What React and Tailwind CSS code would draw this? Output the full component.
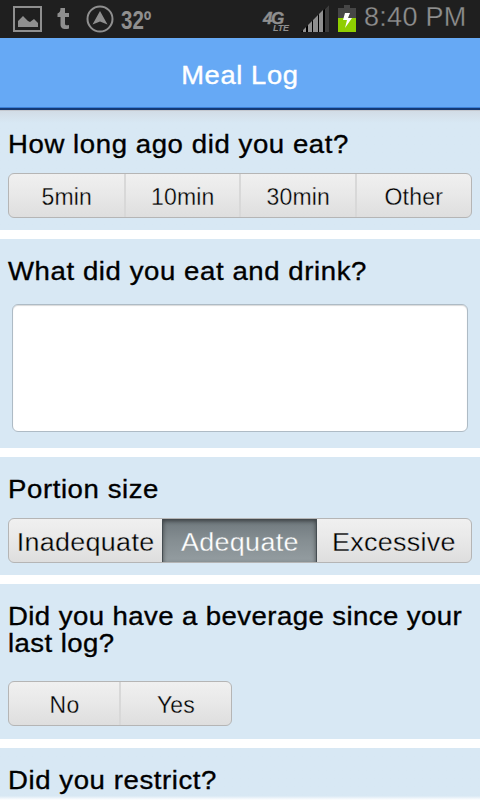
import React from 'react';
import clsx from 'clsx';

function StatusBar() {
  return (
    <div className="flex h-[38px] items-start bg-[#1f1f1f] text-[#8f8f8f]">
      <svg className="ml-[13px] mt-[6px] shrink-0" width="29" height="26" viewBox="0 0 29 26">
        <rect x="1" y="1" width="27" height="24" fill="none" stroke="#8f8f8f" strokeWidth="2" />
        <path d="M5 21v-6l5-5 5 5 2 1 4-3 4 4v4z" fill="#8f8f8f" />
      </svg>
      <svg className="ml-[15px] mt-[7px] shrink-0" width="13" height="23" viewBox="0 0 13 23">
        <path d="M3.5 1H8v5h4v4H8v6.500c0 1.900 1.500 2.100 4 1.500V21.500c-4.500 1.200-8.500.5-8.500-4V10H.5V6.500C2.700 6 3.500 4 3.500 1z" fill="#8f8f8f" />
      </svg>
      <svg className="ml-[16px] mt-[5px] shrink-0" width="28" height="28" viewBox="0 0 28 28">
        <circle cx="14" cy="14" r="12.500" fill="none" stroke="#8f8f8f" strokeWidth="2" />
        <path d="M14 6l7.500 13.500L14 16.500 6.500 19.500z" fill="#8f8f8f" />
      </svg>
      <span className="ml-[7px] mt-[8px] w-[31px] origin-left scale-x-[0.82] whitespace-nowrap font-['Liberation_Sans'] text-[25px] font-bold leading-[24px]">
        32º
      </span>
      <div className="ml-[111px] mt-[11px] w-[30px] shrink-0 font-['Liberation_Sans'] font-bold italic">
        <div className="text-[17px] leading-[15px] tracking-[-1.5px] [-webkit-text-stroke:0.4px_#8f8f8f]">4G</div>
        <div className="-mt-[2px] pl-[10px] text-[9px] leading-[9px] tracking-[-0.2px]">LTE</div>
      </div>
      <svg className="ml-[8px] mt-[5px] shrink-0" width="28" height="27" viewBox="0 0 28 27">
        <path d="M0 27L28 0v27z" fill="#000" />
        <path d="M2 27v-2l3-3v5zM7 27v-7l4-4v11zM12 27V15l5-5v17zM18 27V9l4-4v22z" fill="#8f8f8f" />
        <path d="M24 27V4l4-4v27z" fill="#3c3c3c" />
      </svg>
      <svg className="ml-[9px] mt-[5px] shrink-0" width="18" height="27" viewBox="0 0 18 27">
        <path d="M6 0h6v3h6v10H0V3h6z" fill="#464646" />
        <path d="M0 13h18v14H0z" fill="#8fce00" />
        <path d="M7 8h5l-2 5h4L7 23l2-8H5z" fill="#fff" />
      </svg>
      <span className="ml-[8px] mt-[2px] whitespace-nowrap font-['Liberation_Sans'] text-[27px] leading-[30px] tracking-[0.3px] [-webkit-text-stroke:0.3px_#1f1f1f]">
        8:40 PM
      </span>
    </div>
  );
}

function Header() {
  return (
    <div className="flex h-[72px] items-center justify-center border-b-2 border-[#153a75] bg-[#66a9f5] font-['Liberation_Sans'] text-[26px] text-white shadow-[inset_0_-1px_0_#3b7fd6] [-webkit-text-stroke:0.4px_#fff]">
      <h1 className="mt-[4px] scale-x-[1.05] tracking-[0.6px]">Meal Log</h1>
    </div>
  );
}

function Question({ children, className = 'tracking-[0.55px]' }) {
  return (
    <h2 className={clsx("ml-[8px] origin-left scale-x-[1.06] whitespace-nowrap font-['Liberation_Sans'] text-[26px] leading-[27px] text-black [-webkit-text-stroke:0.35px_#000]", className)}>
      {children}
    </h2>
  );
}

function ButtonGroup({ options, selected, className, large }) {
  return (
    <div className={clsx('ml-[8px] grid h-[45px] auto-cols-fr grid-flow-col overflow-hidden rounded-[6px] border border-[#b5b5b5] bg-linear-to-b from-[#f0f0f0] via-[#e8e8e8] to-[#dedede]', className)}>
      {options.map((option, i) => {
        const active = option === selected;
        return (
          <button
            key={option}
            type="button"
            className={clsx(
              "flex items-center justify-center pt-[3px] font-['Liberation_Sans']",
              large ? 'text-[26px] tracking-[0.3px]' : 'text-[23px] tracking-[0.2px]',
              i > 0 && (active || options[i - 1] !== selected) && '-ml-px',
              i > 0 && !active && options[i - 1] !== selected && 'border-l-2 border-[#d8d8d8]',
              active
                ? 'border-x border-[#454d52] bg-linear-to-b from-[#6f787d] via-[#858e92] to-[#949da1] text-white shadow-[inset_0_2px_4px_rgba(0,0,0,0.5)] [-webkit-text-stroke:0.3px_#858e92]'
                : 'text-black [-webkit-text-stroke:0.3px_#e9e9e9]'
            )}
          >
            <span className={clsx(large && 'scale-x-[1.035]')}>{option}</span>
          </button>
        );
      })}
    </div>
  );
}

function App() {
  return (
    <div className="h-[800px] w-[480px] overflow-hidden bg-white">
      <StatusBar />
      <Header />
      <div className="flex flex-col gap-[9px]">
        <section className="h-[120px] border-t border-[#c4c8cf] bg-[#d8e8f4] bg-linear-to-b from-[#d2dce6] to-[#d8e8f4] to-10% pt-[20px]">
          <Question>How long ago did you eat?</Question>
          <ButtonGroup className="mt-[15px] w-[464px]" options={['5min', '10min', '30min', 'Other']} />
        </section>
        <section className="h-[209px] bg-[#d8e8f4] pt-[19px]">
          <Question>What did you eat and drink?</Question>
          <textarea className="ml-[12px] mt-[19px] block h-[128px] w-[456px] resize-none rounded-[6px] border border-[#aebbc5] bg-white shadow-[inset_0_1px_1px_rgba(0,0,0,0.15)]" />
        </section>
        <section className="h-[118px] bg-[#d8e8f4] pt-[19px]">
          <Question>Portion size</Question>
          <ButtonGroup className="mt-[15px] w-[464px]" large selected="Adequate" options={['Inadequate', 'Adequate', 'Excessive']} />
        </section>
        <section className="h-[155px] bg-[#d8e8f4] pt-[19px]">
          <Question className="tracking-[0.4px]">
            Did you have a beverage since your
            <br />
            last log?
          </Question>
          <ButtonGroup className="mt-[24px] w-[224px]" options={['No', 'Yes']} />
        </section>
        <section className="h-[52px] bg-linear-to-b from-[#d8e8f4] from-92% to-white pt-[19px]">
          <Question>Did you restrict?</Question>
        </section>
      </div>
    </div>
  );
}

export default App;
